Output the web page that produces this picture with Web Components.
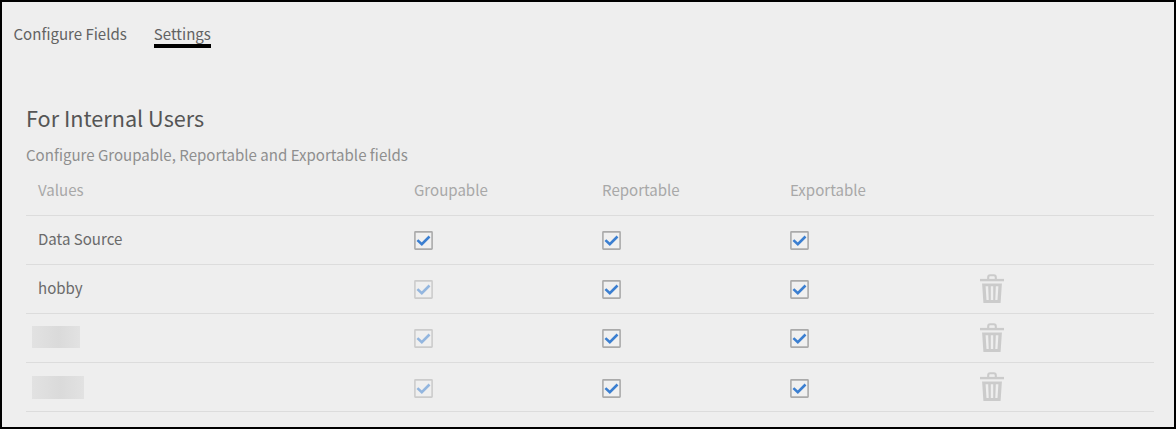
<!DOCTYPE html>
<html lang="en"><head><meta charset="utf-8"><title>Settings</title>
<style>html,body{margin:0;background:#eee}body{font-family:"Noto Sans CJK SC","Open Sans",sans-serif;font-size:15.05px;color:#6a6a6a}</style></head>
<body><settings-page></settings-page>
<script>
const define=(name,html)=>customElements.define(name,class extends HTMLElement{
  constructor(){super();this.attachShadow({mode:'open'}).innerHTML=html;}
});
define('tab-item',`<style>:host{display:block;height:24px;line-height:24px;color:#626262;white-space:nowrap;box-sizing:border-box}
:host([active]){border-bottom:4px solid #000;height:26px}span{display:block;height:22px}</style><span><slot></slot></span>`);
define('check-box',`<style>:host{display:block;width:19px;height:19px}:host([disabled]){opacity:.5}svg{display:block}</style>
<svg width="19" height="19" viewBox="0 0 19 19"><rect x=".9" y=".9" width="17.2" height="17.2" rx=".5" fill="#f0f0f0" stroke="#aaa" stroke-width="1.6"/><path d="M3.4 9.1 7.8 13.1 15.5 5.5" fill="none" stroke="#3b7fd1" stroke-width="2.6"/></svg>`);
define('trash-icon',`<style>:host{display:block;width:24px;height:30px}svg{display:block}</style>
<svg width="24" height="30" viewBox="0 0 24 30"><g fill="none" stroke="#cbcbcb"><path d="M0 6.1H24" stroke-width="2.4"/><path d="M8.2 5.5V3.4Q8.2 1.3 10.2 1.3H13.8Q15.8 1.3 15.8 3.4V5.5" stroke-width="2.1"/></g><path fill="#cbcbcb" fill-rule="evenodd" d="M2.1 9.6H21.9L20.6 29H3.4ZM5.6 12.3 6.5 26H8.7L8.2 12.3ZM10.8 12.3V26H13.2V12.3ZM15.8 12.3 15.3 26H17.5L18.4 12.3Z"/></svg>`);
define('blurred-value',`<style>:host{display:block;height:22px;background:linear-gradient(90deg,#e2e2e2,#dadada 55%,#e2e2e2)}</style>`);
define('field-row',`<style>:host{display:grid;grid-template-columns:376px repeat(4,188px);height:49px;box-sizing:border-box;border-bottom:1px solid #dcdcdc;line-height:24px;align-items:center}
:host([header]){color:#a8a8a8}::slotted(*){margin-left:12px}::slotted(span){margin-bottom:2px}</style><slot></slot>`);
define('settings-page',`<style>
:host{display:block;box-sizing:border-box;width:1176px;height:429px;border:2px solid #000;background:#eee;overflow:hidden}
nav{display:flex;gap:27px;padding:20px 0 0 11.5px;height:46px;box-sizing:border-box}
main{padding:55px 20px 0 24px}
h1{font-size:21.65px;font-weight:400;line-height:30px;margin:0;color:#555}
p{margin:10px 0 0;line-height:24px;color:#8f8f8f;height:24px}
blurred-value{margin:0 0 2px 6px;width:48px}trash-icon{margin:0 0 1px 14px}
.last blurred-value{width:52px;height:23px;margin-bottom:0}.last check-box{margin-top:2px}.last trash-icon{margin-bottom:0}
</style>
<nav><tab-item>Configure Fields</tab-item><tab-item active>Settings</tab-item></nav>
<main><h1>For Internal Users</h1><p>Configure Groupable, Reportable and Exportable fields</p>
<field-row header><span>Values</span><span>Groupable</span><span>Reportable</span><span>Exportable</span></field-row>
<field-row><span>Data Source</span><check-box></check-box><check-box></check-box><check-box></check-box></field-row>
<field-row><span>hobby</span><check-box disabled></check-box><check-box></check-box><check-box></check-box><trash-icon></trash-icon></field-row>
<field-row><blurred-value></blurred-value><check-box disabled></check-box><check-box></check-box><check-box></check-box><trash-icon></trash-icon></field-row>
<field-row class="last"><blurred-value></blurred-value><check-box disabled></check-box><check-box></check-box><check-box></check-box><trash-icon></trash-icon></field-row>
</main>`);
</script></body></html>
